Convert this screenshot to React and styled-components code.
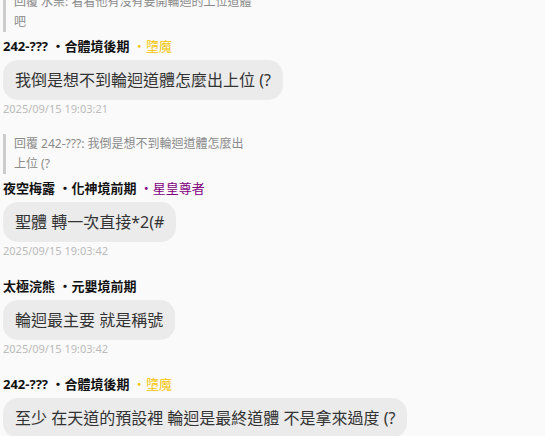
import React from 'react';
import styled, { createGlobalStyle } from 'styled-components';

const GlobalStyle = createGlobalStyle`
  html, body {
    margin: 0;
    padding: 0;
    background: #fafafa;
    font-family: "Noto Sans", "Noto Sans CJK TC", sans-serif;
    overflow: hidden;
  }
`;

const messages = [
  {
    id: 1,
    reply: '回覆 水栗: 看看他有沒有要開輪迴的上位道體吧',
    name: '242-???',
    realm: '合體境後期',
    title: '墮魔',
    titleColor: '#f5c400',
    text: '我倒是想不到輪迴道體怎麼出上位 (?',
    time: '2025/09/15 19:03:21',
  },
  {
    id: 2,
    reply: '回覆 242-???: 我倒是想不到輪迴道體怎麼出上位 (?',
    name: '夜空梅露',
    realm: '化神境前期',
    title: '星皇尊者',
    titleColor: '#800080',
    text: '聖體 轉一次直接*2(#',
    time: '2025/09/15 19:03:42',
  },
  {
    id: 3,
    name: '太極浣熊',
    realm: '元嬰境前期',
    text: '輪迴最主要 就是稱號',
    time: '2025/09/15 19:03:42',
  },
  {
    id: 4,
    name: '242-???',
    realm: '合體境後期',
    title: '墮魔',
    titleColor: '#f5c400',
    text: '至少 在天道的預設裡 輪迴是最終道體 不是拿來過度 (?',
    time: '2025/09/15 19:03:50',
  },
];

const App = () => {
  return (
    <>
      <GlobalStyle />
      <List>
        {messages.map(m => (
          <Message key={m.id}>
            {m.reply && <Quote>{m.reply}</Quote>}
            <Header>
              <Name>{m.name}</Name>
              <Realm> ・{m.realm}</Realm>
              {m.title && <Title $color={m.titleColor}> ・{m.title}</Title>}
            </Header>
            <Bubble>{m.text}</Bubble>
            <Time>{m.time}</Time>
          </Message>
        ))}
      </List>
    </>
  );
};

const List = styled.div`
  display: flex;
  flex-direction: column;
  gap: 17px;
  margin-top: -8px;
  padding-left: 3px;
`;

const Message = styled.div`
  display: flex;
  flex-direction: column;
  align-items: flex-start;
`;

const Quote = styled.div`
  border-left: 3px solid #cccccc;
  padding-left: 8px;
  max-width: 239.5px;
  font-size: 12px;
  line-height: 20px;
  color: #8a8a8a;
  margin-bottom: 4px;
`;

const Header = styled.div`
  font-size: 13px;
  line-height: 20px;
  font-weight: 700;
  color: #111;
  margin-bottom: 4px;
  white-space: nowrap;
`;

const Name = styled.span``;

const Realm = styled.span``;

const Title = styled.span`
  color: ${props => props.$color};
  font-weight: 400;
`;

const Bubble = styled.div`
  background: #ebebeb;
  border-radius: 15px;
  padding: 8px 12px;
  font-size: 16px;
  line-height: 24px;
  color: #333;
`;

const Time = styled.div`
  font-size: 11px;
  line-height: 16px;
  color: #bbbbbb;
  margin-top: 1px;
`;

export default App;
